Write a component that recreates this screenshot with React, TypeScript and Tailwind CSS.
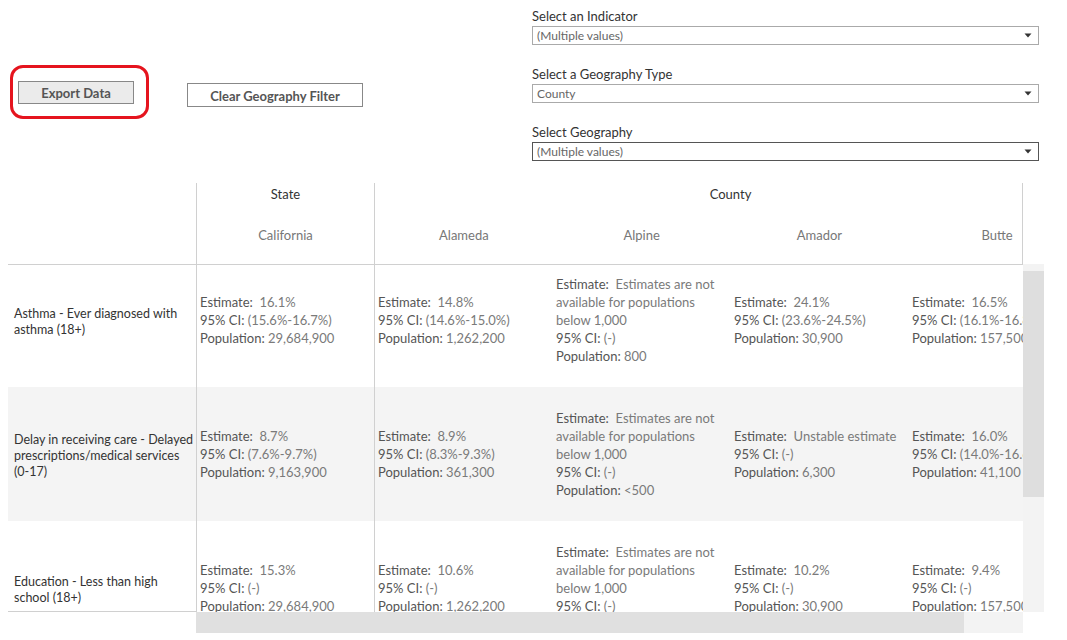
import React from "react";

type Seg = [string, string];
type Cell = Seg[];

const na = (pop: string): Cell => [
  ["Estimate:  ", "Estimates are not"],
  ["", "available for populations"],
  ["", "below 1,000"],
  ["95% CI: ", "(-)"],
  ["Population: ", pop],
];
const std = (e: string, ci: string, pop: string): Cell => [
  ["Estimate:  ", e],
  ["95% CI: ", ci],
  ["Population: ", pop],
];

const rows: { label: string[]; bg: string; cells: Cell[] }[] = [
  {
    label: ["Asthma - Ever diagnosed with", "asthma (18+)"],
    bg: "bg-white",
    cells: [
      std("16.1%", "(15.6%-16.7%)", "29,684,900"),
      std("14.8%", "(14.6%-15.0%)", "1,262,200"),
      na("800"),
      std("24.1%", "(23.6%-24.5%)", "30,900"),
      std("16.5%", "(16.1%-16.8%)", "157,500"),
    ],
  },
  {
    label: ["Delay in receiving care - Delayed", "prescriptions/medical services", "(0-17)"],
    bg: "bg-[#f4f4f4]",
    cells: [
      std("8.7%", "(7.6%-9.7%)", "9,163,900"),
      std("8.9%", "(8.3%-9.3%)", "361,300"),
      na("<500"),
      std("Unstable estimate", "(-)", "6,300"),
      std("16.0%", "(14.0%-16.6%)", "41,100"),
    ],
  },
  {
    label: ["Education - Less than high", "school (18+)"],
    bg: "bg-white",
    cells: [
      std("15.3%", "(-)", "29,684,900"),
      std("10.6%", "(-)", "1,262,200"),
      na("1,000"),
      std("10.2%", "(-)", "30,900"),
      std("9.4%", "(-)", "157,500"),
    ],
  },
];

function Arrow() {
  return (
    <svg width="8" height="5" viewBox="0 0 8 5" className="shrink-0">
      <path d="M0.5 0.5 H7.5 L4 4.5 Z" fill="#333" />
    </svg>
  );
}

function Dropdown({ label, value, dark }: { label: string; value: string; dark?: boolean }) {
  return (
    <div className="flex flex-col">
      <div className="h-[14px] leading-[14px] text-[13px] text-[#333]">{label}</div>
      <div
        className={`mt-[3px] h-[19px] w-[507px] border bg-white flex items-center justify-between pl-[4px] pr-[6px] ${
          dark ? "border-[#555]" : "border-[#aaa]"
        }`}
      >
        <span className="text-[12px] leading-[14px] text-[#666]">{value}</span>
        <Arrow />
      </div>
    </div>
  );
}

function CellView({ cell, className }: { cell: Cell; className: string }) {
  return (
    <div className={`w-[178px] shrink-0 h-full flex flex-col justify-center ${className}`}>
      {cell.map((s, i) => (
        <div key={i} className="h-[18px] leading-[18px] whitespace-pre text-[13px]">
          <span className="text-[#555]">{s[0]}</span>
          <span className="text-[#7a7a7a]">{s[1]}</span>
        </div>
      ))}
    </div>
  );
}

export default function App() {
  return (
    <div
      className="relative w-[1067px] h-[640px] bg-white overflow-hidden"
      style={{ fontFamily: "Lato, 'Open Sans', sans-serif" }}
    >
      {/* Top section */}
      <div className="flex h-[183px]">
        <div className="w-[532px] shrink-0 flex items-start">
          <button className="ml-[18px] mt-[81px] w-[116px] h-[23px] pt-[2px] bg-[#ebebeb] border border-[#888] text-[13px] font-bold text-[#555] flex items-center justify-center">
            Export Data
          </button>
          <button className="ml-[53px] mt-[83px] w-[176px] h-[24px] pt-[3px] bg-white border border-[#888] text-[13px] font-bold text-[#555] flex items-center justify-center">
            Clear Geography Filter
          </button>
        </div>
        <div className="pt-[9px] flex flex-col gap-[22px]">
          <Dropdown label="Select an Indicator" value="(Multiple values)" />
          <Dropdown label="Select a Geography Type" value="County" />
          <Dropdown label="Select Geography" value="(Multiple values)" dark />
        </div>
      </div>

      {/* Annotation */}
      <div className="absolute left-[10px] top-[65px] w-[139px] h-[54px] border-[3px] border-[#e5141e] rounded-[13px]" />

      {/* Table */}
      <div className="flex ml-[8px]">
        {/* Row labels */}
        <div className="w-[188px] shrink-0">
          <div className="h-[82px] border-b border-[#d0d0d0]" />
          <div className="h-[347px] border-b border-[#d0d0d0] overflow-hidden">
            <div className="-mt-[12px]">
              {rows.map((r, i) => (
                <div key={i} className={`h-[134px] flex flex-col justify-center pl-[6px] pt-[3px] ${r.bg}`}>
                  {r.label.map((l, j) => (
                    <div key={j} className="h-[16px] leading-[16px] text-[12.5px] text-[#333] whitespace-nowrap">
                      {l}
                    </div>
                  ))}
                </div>
              ))}
            </div>
          </div>
        </div>

        {/* Data */}
        <div className="w-[827px] shrink-0">
          <div className="h-[82px] border-b border-r border-[#d0d0d0] overflow-hidden">
            <div className="flex w-[890px] h-full">
              <div className="w-[178px] shrink-0 border-l border-[#d0d0d0] flex flex-col items-center">
                <div className="mt-[3px] h-[16px] leading-[16px] text-[13px] text-[#333]">State</div>
                <div className="mt-[25px] h-[16px] leading-[16px] text-[13px] text-[#777]">California</div>
              </div>
              <div className="w-[712px] shrink-0 border-l border-[#d0d0d0] flex flex-col">
                <div className="mt-[3px] h-[16px] leading-[16px] text-[13px] text-[#333] text-center">County</div>
                <div className="mt-[25px] flex">
                  {["Alameda", "Alpine", "Amador", "Butte"].map((n) => (
                    <div key={n} className="w-[178px] text-center h-[16px] leading-[16px] text-[13px] text-[#777]">
                      {n}
                    </div>
                  ))}
                </div>
              </div>
            </div>
          </div>
          <div className="h-[347px] overflow-hidden">
            <div className="-mt-[12px] w-[890px]">
              {rows.map((r, i) => (
                <div key={i} className={`h-[134px] flex ${r.bg}`}>
                  {r.cells.map((c, j) => (
                    <CellView
                      key={j}
                      cell={c}
                      className={j < 2 ? "border-l border-[#d0d0d0] pl-[3px]" : "pl-[4px]"}
                    />
                  ))}
                </div>
              ))}
            </div>
          </div>
          <div className="h-[21px] flex">
            <div className="w-[768px] bg-[#e0e0e0]" />
            <div className="flex-1 bg-[#f3f3f3]" />
          </div>
        </div>

        {/* Vertical scrollbar */}
        <div className="w-[21px] shrink-0">
          <div className="h-[81px]" />
          <div className="h-[348px] bg-[#f3f3f3] pt-[7px]">
            <div className="h-[226px] bg-[#dedede]" />
          </div>
        </div>
      </div>
    </div>
  );
}
